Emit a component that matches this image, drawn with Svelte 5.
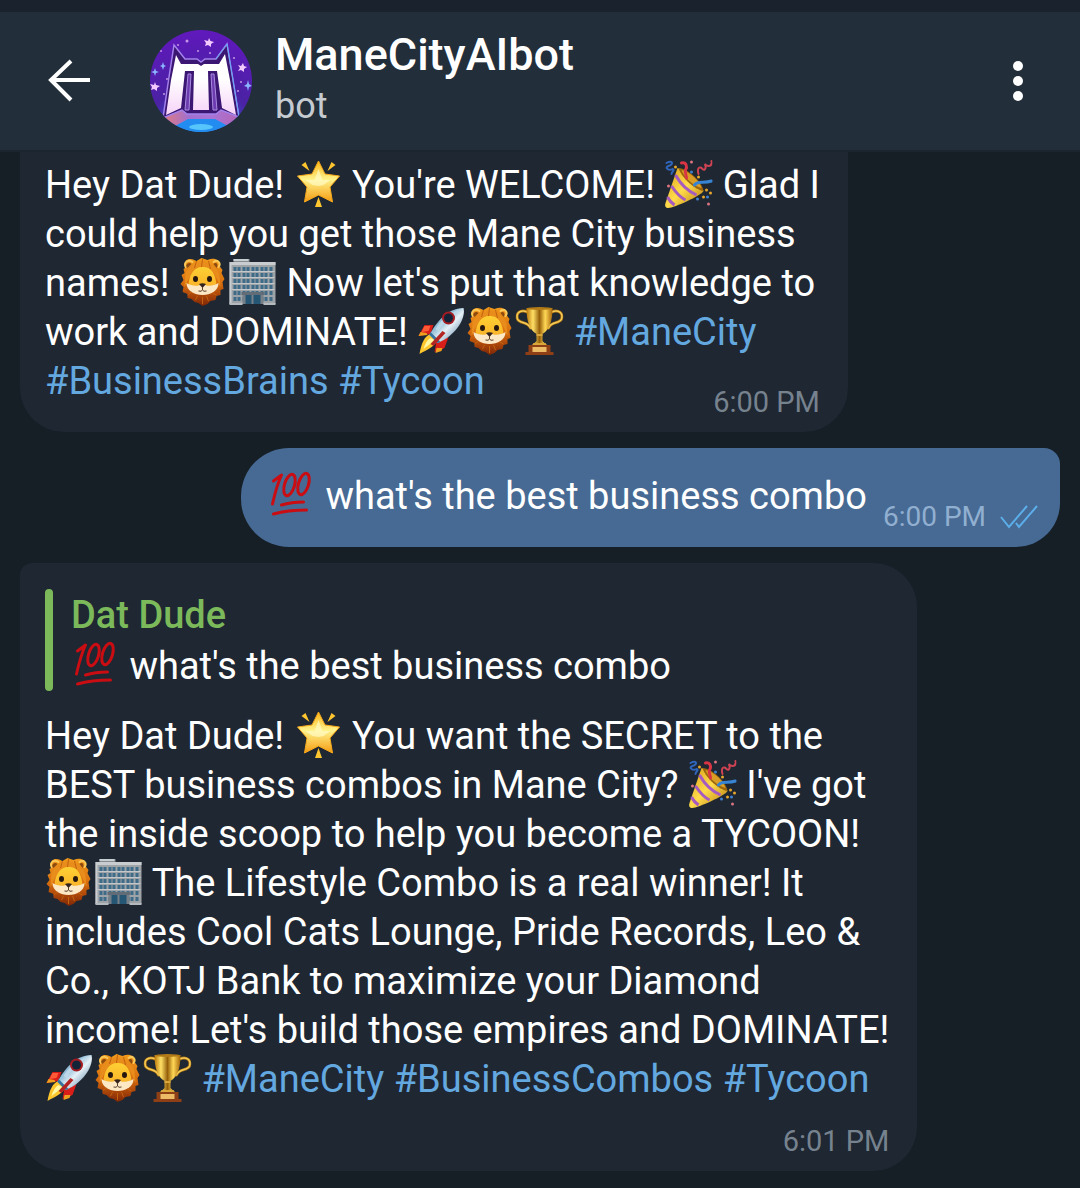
<script>
    const chat = { name: "ManeCityAIbot", status: "bot" };

    const messages = [
        {
            side: "in",
            continued: true,
            time: "6:00 PM",
            lines: [
                "Hey Dat Dude! 🌟 You're WELCOME! 🎉 Glad I",
                "could help you get those Mane City business",
                "names! 🦁🏢 Now let's put that knowledge to",
                "work and DOMINATE! 🚀🦁🏆 #ManeCity",
                "#BusinessBrains #Tycoon",
            ],
        },
        {
            side: "out",
            time: "6:00 PM",
            read: true,
            lines: ["💯 what's the best business combo"],
        },
        {
            side: "in",
            time: "6:01 PM",
            timeBelow: true,
            reply: { name: "Dat Dude", text: "💯 what's the best business combo" },
            lines: [
                "Hey Dat Dude! 🌟 You want the SECRET to the",
                "BEST business combos in Mane City? 🎉 I've got",
                "the inside scoop to help you become a TYCOON!",
                "🦁🏢 The Lifestyle Combo is a real winner! It",
                "includes Cool Cats Lounge, Pride Records, Leo &",
                "Co., KOTJ Bank to maximize your Diamond",
                "income! Let's build those empires and DOMINATE!",
                "🚀🦁🏆 #ManeCity #BusinessCombos #Tycoon",
            ],
        },
    ];

    const emoji = {
        "🌟": "star",
        "🎉": "party",
        "🦁": "lion",
        "🏢": "office",
        "🚀": "rocket",
        "🏆": "trophy",
        "💯": "hundred",
    };

    function split(line) {
        return line.split(/(🌟|🎉|🦁|🏢|🚀|🏆|💯|#\w+)/u).filter((part) => part !== "");
    }
</script>

{#snippet rich(line)}
    {#each split(line) as part}
        {#if emoji[part]}
            <svg class="emoji" viewBox="0 0 48 48" role="img" aria-label={emoji[part]}><use href="#{emoji[part]}" /></svg>
        {:else if part.startsWith("#")}
            <a href={part}>{part}</a>
        {:else}
            <span>{part}</span>
        {/if}
    {/each}
{/snippet}

<svg class="defs" aria-hidden="true">
    <defs>
        <linearGradient id="gold" x1="0" y1="0" x2="0" y2="1">
            <stop offset="0" stop-color="#fbb414" />
            <stop offset=".45" stop-color="#fff28a" />
            <stop offset="1" stop-color="#f49b12" />
        </linearGradient>
        <linearGradient id="cone" x1="0" y1="0" x2="1" y2="1">
            <stop offset="0" stop-color="#d79b13" />
            <stop offset=".5" stop-color="#ffdc4b" />
            <stop offset="1" stop-color="#b37509" />
        </linearGradient>
        <linearGradient id="mane" x1="0" y1="0" x2="0" y2="1">
            <stop offset="0" stop-color="#f09a1c" />
            <stop offset=".5" stop-color="#d9700f" />
            <stop offset=".75" stop-color="#b04a0a" />
            <stop offset="1" stop-color="#7d2606" />
        </linearGradient>
        <linearGradient id="face" x1="0" y1="0" x2="0" y2="1">
            <stop offset="0" stop-color="#fdd033" />
            <stop offset=".6" stop-color="#fbb92b" />
            <stop offset="1" stop-color="#eda02c" />
        </linearGradient>
        <linearGradient id="cup" x1="0" y1="0" x2="1" y2="0">
            <stop offset="0" stop-color="#b97408" />
            <stop offset=".25" stop-color="#ffe067" />
            <stop offset=".5" stop-color="#96600a" />
            <stop offset=".72" stop-color="#ffd755" />
            <stop offset="1" stop-color="#a3640a" />
        </linearGradient>
        <linearGradient id="hull" x1="0" y1="0" x2="1" y2="1">
            <stop offset="0" stop-color="#4f86ac" />
            <stop offset=".4" stop-color="#9cc3db" />
            <stop offset=".55" stop-color="#e6f1f7" />
            <stop offset="1" stop-color="#2f5f8c" />
        </linearGradient>
    </defs>

    <symbol id="star" viewBox="0 0 48 48">
        <path fill="url(#gold)" stroke="#f5a81a" stroke-width="1" stroke-linejoin="round" d="M24 1 30.500 14 45 16 35.500 27 38 42 24 35 10 42 12.500 27 3 16 17.500 14Z" />
        <path fill="#ffc52e" d="M7 5 11 2 15 11ZM41 5 37 2 33 11ZM24 37 27.500 47H20.500Z" />
        <path fill="#fffbc6" opacity=".7" d="M24 9 28 20 36 20 29 25 24 26 18 25 11 20 20 20Z" />
    </symbol>

    <symbol id="party" viewBox="0 0 48 48">
        <path fill="url(#cone)" d="M13 8C20 10 35 21 39 31 38 35 9 48 4 48 1 48 0 46 1 43Z" />
        <path fill="none" stroke="#a65bc0" stroke-width="3" d="M11 15C16 24 23 31 32 35M7 26C11 32 15 37 21 40M3 37C5 41 7 43 10 45" />
        <path fill="#9b650d" d="M14 8C22 8 37 20 39 31 31 30 17 18 14 8Z" />
        <path fill="#d99d25" d="M17 10C26 12 35 21 37 28 29 26 20 18 17 10Z" />
        <path fill="none" stroke="#d93545" stroke-width="3" stroke-linecap="round" d="M17 3C22 2 23 7 21 10 20 13 22 15 22 18" />
        <path fill="none" stroke="#3884d2" stroke-width="3" stroke-linecap="round" d="M30 25C34 20 39 24 47 21" />
        <path fill="none" stroke="#2f65ba" stroke-width="2" stroke-linecap="round" d="M2 3C9-1 9 5 4 6-1 8 5 11 8 9 11 10 7 12 7 14" />
        <path fill="none" stroke="#ce4353" stroke-width="2" stroke-linecap="round" d="M34 14C32 7 36 6 38 9 41 12 42 6 40 4 43 7 48 7 47 1" />
        <g fill="#e7a72c"><circle cx="11" cy="7" r="1.500" /><circle cx="34" cy="17" r="1.500" /><circle cx="42" cy="30" r="1.500" /><circle cx="46" cy="33" r="1.500" /><circle cx="39" cy="37" r="1.500" /></g>
        <g fill="#db7480"><circle cx="4" cy="26" r="1.500" /><circle cx="44" cy="44" r="1.500" /><circle cx="27" cy="2" r="1.500" /></g>
        <g fill="#407fd0"><circle cx="27" cy="12" r="1.500" /><circle cx="43" cy="37" r="1.500" /><circle cx="33" cy="39" r="1.500" /></g>
    </symbol>

    <symbol id="lion" viewBox="0 0 48 48">
        <path fill="url(#mane)" d="M6 3C10-1 15 2 17 3L22 0 28 2C35-1 41 2 40 8L43 12 42 15 45 21 43 24 44 31 41 32 41 37 37 38 36 42 31 43 28 46 23 48 19 45 15 44 12 41 8 40 8 36 3 34 4 29 1 26 4 22 2 17 5 15 4 11 7 9Z" />
        <path fill="none" stroke="#fbc958" stroke-width="2" stroke-linecap="round" d="M6 9C4 4 9 1 13 4M34 4C38 1 42 5 39 9" />
        <path fill="#8c4a10" d="M7 8C7 5 10 4 12 6L8 10ZM38 8C38 5 36 4 34 6L37 10Z" />
        <path fill="#e88c1b" d="M6 15C9 8 16 5 23 3 30 5 38 9 40 17L41 29 37 20 33 13 24 10 14 13 9 21 5 29Z" />
        <path fill="url(#face)" d="M23 9C32 8 36 17 37 26 37 32 31 35 23 36 15 35 9 32 9 26 10 17 14 9 23 9Z" />
        <path fill="#fce8c5" d="M23 26C28 29 34 28 39 25 39 33 31 37 23 37 15 37 7 33 7 25 12 28 18 29 23 26Z" />
        <path fill="none" stroke="#c2620f" stroke-width="1" d="M17 3 15 10M23 1 22 9M29 3 31 11M8 37 12 34M37 37 33 35M16 42 18 38M29 43 27 38M23 46V39" />
        <ellipse cx="16" cy="21" rx="2.500" ry="3" fill="#27180f" /><ellipse cx="30" cy="21" rx="2.500" ry="3" fill="#27180f" />
        <path fill="#32231d" d="M19.500 26Q23 24.500 26.500 26L23 30Z" />
        <path fill="none" stroke="#57402d" stroke-width="1" d="M23 29V32M19 33Q22 34 23 32 24 34 27 33" />
    </symbol>

    <symbol id="office" viewBox="0 0 48 48">
        <path fill="#858d93" d="M5 1H21V5H5Z" /><path fill="#c7ced1" d="M5 1H20V3H5Z" />
        <path fill="#9da3a7" d="M1 4H47V46H1Z" /><path fill="#c9cdd0" d="M1 4H47V7H1ZM1 4H3V46H1Z" />
        <g fill="#3d6b88">
            {#each [9, 15, 21, 27, 33, 39] as y}
                {#each [5, 9, 14, 18, 23, 27, 32, 36, 41] as x}
                    <rect {x} {y} width="3" height="4" />
                {/each}
            {/each}
        </g>
        <path fill="#c4c8cb" d="M3 13H46V14H3ZM3 19H46V20H3ZM3 25H46V26H3ZM3 31H46V32H3Z" />
        <path fill="#777f87" d="M14 35H35V46H14Z" /><path fill="#255674" d="M17 37H23V46H17ZM25 37H32V46H25Z" />
        <path fill="#626c76" d="M13 34H36V37H13Z" /><path fill="#b4babd" d="M1 45H14V47H1ZM35 45H47V47H35Z" />
    </symbol>

    <symbol id="rocket" viewBox="0 0 48 48">
        <path fill="#d91d18" d="M16 18 7 18 1 29 13 27ZM29 31 19 34 17 45 27 41 31 30Z" />
        <path fill="#ff5b37" d="M7 19 4 25 11 24 13 19Z" />
        <path fill="#ef9e1d" d="M1 29 3 25 9 26 10 28ZM18 46 19 41 25 41 24 44Z" />
        <path fill="#fec62d" d="M13 27C7 29 4 36 2 47 6 44 13 43 20 34Z" />
        <path fill="#fff7a2" d="M13 31Q8 34 6 42 13 37 17 33Z" />
        <path fill="url(#hull)" d="M46 1C49 14 34 31 20 36L12 28C18 16 30 1 46 1Z" />
        <path fill="#35729e" d="M12 28 20 36 23 35 13 25Z" />
        <path fill="#c3dceb" opacity=".8" d="M43 3C31 5 22 15 18 22L21 24C26 15 34 8 43 3Z" />
        <path fill="#b32522" d="M28 26 16 39 13 37 25 24Z" />
        <circle cx="31" cy="11" r="6.500" fill="#a51c22" /><circle cx="31" cy="11" r="4.500" fill="#142438" />
    </symbol>

    <symbol id="trophy" viewBox="0 0 48 48">
        <path fill="none" stroke="#ad7415" stroke-width="3" stroke-linecap="round" d="M12 5C5 2 0 6 2 12 4 17 12 14 15 21M36 5C43 2 48 6 46 12 44 17 36 14 33 21" />
        <path fill="none" stroke="#f5cc56" stroke-width="1.500" stroke-linecap="round" d="M12 5C5 2 0 6 2 12 4 17 12 14 15 21M36 5C43 2 48 6 46 12 44 17 36 14 33 21" />
        <path fill="url(#cup)" d="M11 1H37C37 14 34 23 27 27V34L32 39H16L21 34V27C14 23 11 14 11 1Z" />
        <ellipse cx="24" cy="1.500" rx="13" ry="1.500" fill="#b37b17" />
        <path fill="#d9a63a" d="M21 27H27V29H21ZM18 36H30L32 39H16Z" />
        <path fill="#8f3f15" d="M13 38H35V45H13ZM10 45H38V48H10Z" />
        <path fill="#edbb66" d="M17 40H31V45H17Z" />
    </symbol>

    <symbol id="hundred" viewBox="0 0 48 48">
        <g fill="none" stroke="#c90d12" stroke-width="3" stroke-linecap="round" stroke-linejoin="round">
            <path d="M6 10 14 4Q9 15 5 33" />
            <ellipse cx="22" cy="14" rx="5" ry="11" transform="rotate(17 22 14)" />
            <ellipse cx="36" cy="13" rx="5" ry="11" transform="rotate(17 36 13)" />
            <path d="M14 34Q24 31 36 31M6 43Q20 39 39 39" />
        </g>
    </symbol>
</svg>

<div class="app">
    <header>
        <button class="back" aria-label="Back">
            <svg width="44" height="44" viewBox="0 0 44 44" fill="none" stroke="#fff" stroke-width="4">
                <path d="M42 21H4M23 2 3 21 23 41" />
            </svg>
        </button>
        <svg class="avatar" viewBox="0 0 102 102" role="img" aria-label="ManeCityAIbot avatar">
            <defs>
                <radialGradient id="sky" cx=".5" cy="1" r="1">
                    <stop offset="0" stop-color="#29a4fa" />
                    <stop offset=".25" stop-color="#3158d5" />
                    <stop offset=".5" stop-color="#4a22a3" />
                    <stop offset="1" stop-color="#6119bd" />
                </radialGradient>
                <linearGradient id="letter" x1="0" y1="0" x2="0" y2="1">
                    <stop offset=".4" stop-color="#fff" />
                    <stop offset="1" stop-color="#f6d3f8" />
                </linearGradient>
                <linearGradient id="foot" x1="0" y1="0" x2="1" y2="0">
                    <stop offset="0" stop-color="#e37b7e" />
                    <stop offset=".35" stop-color="#a06fd0" />
                    <stop offset=".65" stop-color="#a874d5" />
                    <stop offset="1" stop-color="#b565b5" />
                </linearGradient>
                <clipPath id="round"><circle cx="51" cy="51" r="51" /></clipPath>
            </defs>
            <g clip-path="url(#round)">
                <path fill="url(#sky)" d="M0 0H102V102H0Z" />
                <ellipse cx="51" cy="97" rx="27" ry="10" fill="#238cf0" />
                <ellipse cx="51" cy="97" rx="12" ry="3" fill="#6bddff" opacity=".7" />
                <g fill="#f2caff">
                    <path d="M59 8 60.500 11 64 12 61 14 61 17 58 15 55 16 56 13 54 10 58 11ZM5 52 6 55 10 56 7 58 7 61 4 59 1 60 2 57 0 54 4 55ZM93 33 94 36 97 37 94 39 94 42 91 40 88 41 90 38 88 35 91 36Z" />
                    <path fill="#8bb6ff" d="M5 38 6 41 9 42 6 43 5 46 4 43 1 42 4 41ZM13 32 14 35 16 36 14 37 13 40 12 37 10 36 12 35ZM98 50 99 54 102 56 99 57 98 61 97 57 94 56 97 54Z" />
                    <g opacity=".7"><circle cx="37" cy="11" r="1.500" /><circle cx="48" cy="21" r="1" /><circle cx="60" cy="23" r="1" /><circle cx="11" cy="21" r="1" /><circle cx="84" cy="28" r="1" /><circle cx="17" cy="49" r="1" /><circle cx="91" cy="52" r="1" /><circle cx="14" cy="64" r="1" /><circle cx="88" cy="61" r="1" /><circle cx="28" cy="15" r="1" /></g>
                </g>
                <path fill="url(#foot)" d="M13 87 33 78 38 82H65L70 78 89 87 78 96 65 89H38L25 96Z" />
                <path fill="#3b1672" stroke="#a382ec" stroke-width="1.500" d="M24 15 35 29 47 29 51 32 55 29 66 29 77 14 83 50 89 87 71 80 66 84H37L32 80 13 88 19 47Z" />
                <path fill="none" stroke="#62a9f5" stroke-width="1" d="M66 29 77 14 83 50 89 87" />
                <path fill="url(#letter)" d="M26 25 31 34H48L51 36 54 34H69L75 24 80 50 86 85 72 78 67 41H58L59 80H43L44 41H35L31 78 16 85 21 50Z" />
                <path fill="#6c3bb0" stroke="#a98be0" stroke-width="1" d="M38 44H41L39 80H35ZM61 44H64L67 80H63Z" />
            </g>
        </svg>
        <div class="who">
            <h1>{chat.name}</h1>
            <p>{chat.status}</p>
        </div>
        <button class="menu" aria-label="More options">
            <svg width="12" height="42" viewBox="0 0 12 42" fill="#fff">
                <circle cx="6" cy="6" r="5" />
                <circle cx="6" cy="21" r="5" />
                <circle cx="6" cy="36" r="5" />
            </svg>
        </button>
    </header>

    <main>
        {#each messages as message}
            <article class="bubble {message.side}" class:continued={message.continued} class:below={message.timeBelow}>
                {#if message.reply}
                    <blockquote>
                        <strong>{message.reply.name}</strong>
                        <div class="line">{@render rich(message.reply.text)}</div>
                    </blockquote>
                {/if}
                <div class="text">
                    {#each message.lines as line}
                        <div class="line">{@render rich(line)}</div>
                    {/each}
                </div>
                <footer>
                    <time>{message.time}</time>
                    {#if message.read}
                        <svg width="38" height="24" viewBox="0 0 38 24" fill="none" stroke="#5caeea" stroke-width="2" role="img" aria-label="Read">
                            <path d="M1 12 9 22 27 1M16 18 19 22 37 1" />
                        </svg>
                    {/if}
                </footer>
            </article>
        {/each}
    </main>
</div>

<style>
    :global(body) {
        background: #161e26;
    }
    .defs {
        position: absolute;
        width: 0;
        height: 0;
    }
    .app {
        min-height: 100vh;
        box-sizing: border-box;
        border-top: 12px solid #1a222d;
        background: #161e26;
        color: #fff;
        font-family: Roboto, "Liberation Sans", sans-serif;
        font-size: 38px;
        line-height: 49px;
    }
    header {
        display: flex;
        align-items: center;
        height: 140px;
        box-sizing: border-box;
        padding: 0 48px;
        border-bottom: 2px solid #1b2530;
        background: #222e3a;
    }
    button {
        display: flex;
        padding: 0;
        border: 0;
        background: none;
        cursor: pointer;
    }
    .avatar {
        width: 102px;
        height: 102px;
        margin: 0 23px 0 58px;
        flex-shrink: 0;
    }
    .who {
        flex: 1;
        min-width: 0;
    }
    h1 {
        margin: 0;
        font-size: 45px;
        font-weight: 500;
        line-height: 50px;
    }
    p {
        margin: 0;
        color: #c5cbd1;
        font-size: 36px;
        line-height: 52px;
    }
    .menu {
        padding: 0 8px;
    }
    main {
        display: flex;
        flex-direction: column;
        align-items: flex-start;
        gap: 16px;
        padding: 0 20px 16px;
    }
    .bubble {
        box-sizing: border-box;
        max-width: 100%;
        padding: 26px 28px 13px 25px;
        border-radius: 12px 44px 44px 44px;
        background: #1e2732;
    }
    .continued {
        padding-top: 9px;
        border-top-left-radius: 0;
        border-top-right-radius: 0;
    }
    .out {
        display: flex;
        align-items: flex-end;
        gap: 16px;
        align-self: flex-end;
        padding: 24px 22px 26px 26px;
        border-radius: 48px 16px 44px 48px;
        background: #466a93;
    }
    .line {
        display: flex;
        align-items: center;
        height: 49px;
        white-space: pre;
    }
    .emoji {
        width: 49px;
        height: 48px;
        flex-shrink: 0;
        margin-bottom: 4px;
    }
    a {
        color: #64a8e0;
        text-decoration: none;
    }
    blockquote {
        display: grid;
        grid-template-columns: 8px 1fr;
        column-gap: 18px;
        margin: 0 0 21px;
    }
    blockquote::before {
        content: "";
        grid-row: span 2;
        border-radius: 4px;
        background: #7bb95b;
    }
    strong {
        color: #7bb95b;
        font-weight: 500;
        line-height: 53px;
    }
    footer {
        display: flex;
        justify-content: flex-end;
        align-items: center;
        gap: 14px;
        color: #76828e;
        font-size: 29px;
        line-height: 34px;
    }
    .in footer {
        margin-top: -21px;
    }
    .in.below footer {
        margin-top: 20px;
    }
    .out footer {
        margin-bottom: -13px;
        color: #91afd0;
        font-size: 28px;
    }
</style>
